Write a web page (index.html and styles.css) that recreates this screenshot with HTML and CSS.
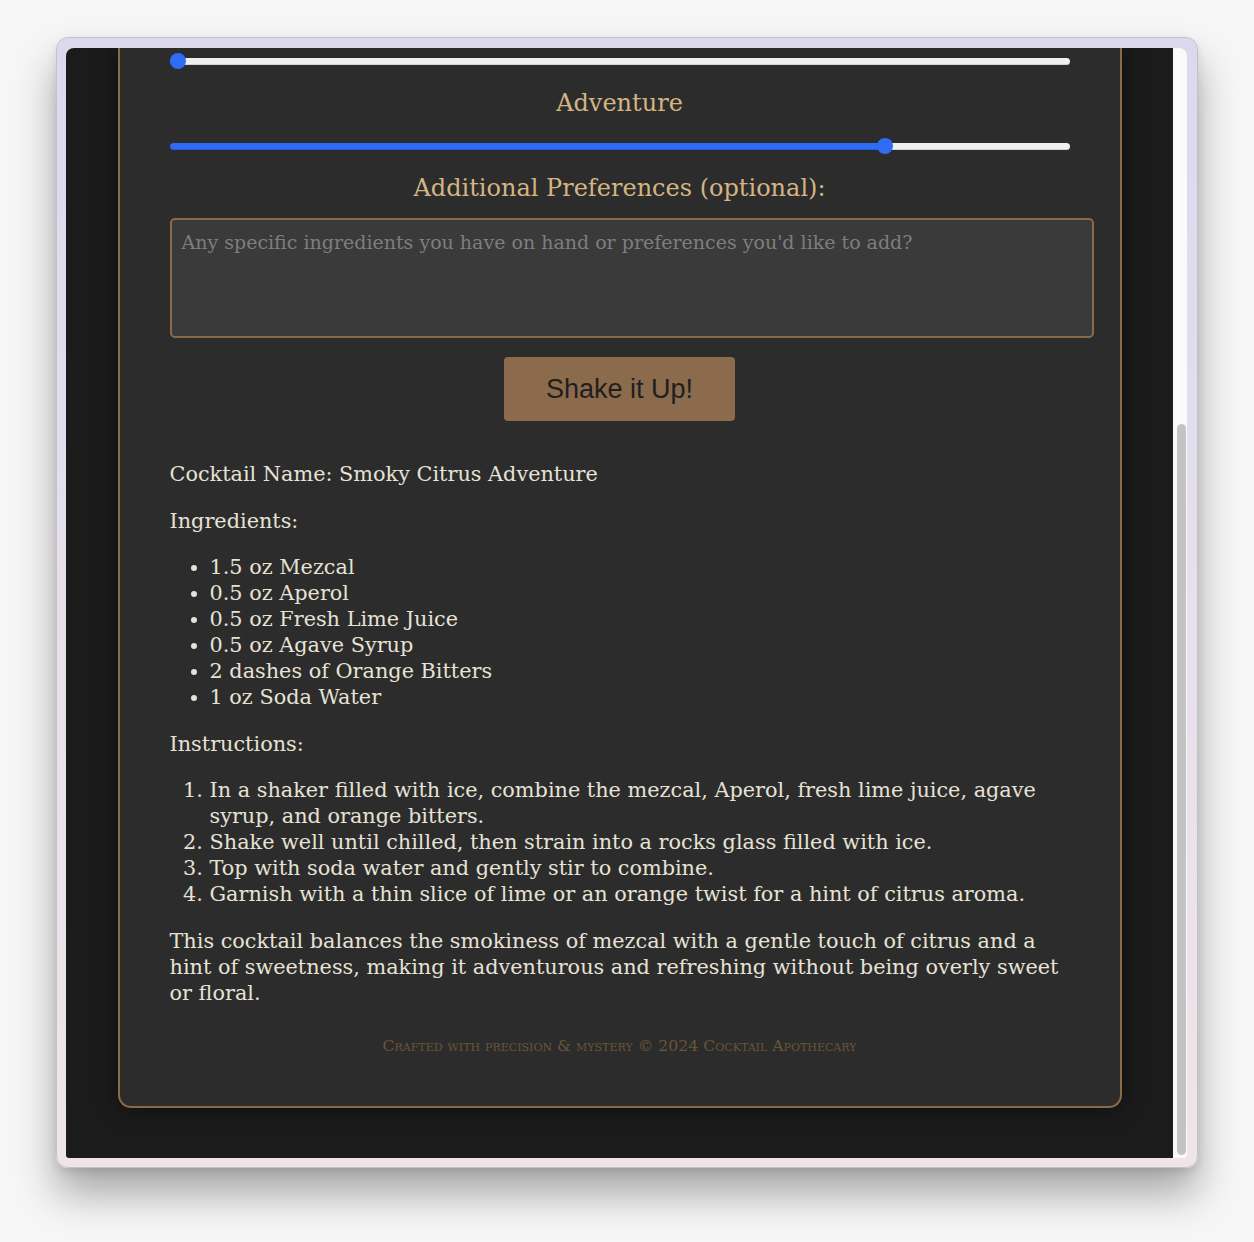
FILE: index.html
```html
<!DOCTYPE html>
<html lang="en">
<head>
<meta charset="utf-8">
<title>Cocktail Apothecary</title>
<link rel="stylesheet" href="styles.css">
</head>
<body>
<div class="window">
  <div class="viewport">
    <div class="page">
      <main class="card">
        <input type="range" class="slider" min="0" max="100" value="0" style="--p:0">
        <label class="label">Adventure</label>
        <input type="range" class="slider" min="0" max="100" value="80" style="--p:0.8">
        <label class="label">Additional Preferences (optional):</label>
        <textarea class="prefs" placeholder="Any specific ingredients you have on hand or preferences you'd like to add?"></textarea>
        <div class="actions"><button class="shake" type="button">Shake it Up!</button></div>
        <div class="result">
          <p>Cocktail Name: Smoky Citrus Adventure</p>
          <p>Ingredients:</p>
          <ul>
            <li>1.5 oz Mezcal</li>
            <li>0.5 oz Aperol</li>
            <li>0.5 oz Fresh Lime Juice</li>
            <li>0.5 oz Agave Syrup</li>
            <li>2 dashes of Orange Bitters</li>
            <li>1 oz Soda Water</li>
          </ul>
          <p>Instructions:</p>
          <ol>
            <li>In a shaker filled with ice, combine the mezcal, Aperol, fresh lime juice, agave syrup, and orange bitters.</li>
            <li>Shake well until chilled, then strain into a rocks glass filled with ice.</li>
            <li>Top with soda water and gently stir to combine.</li>
            <li>Garnish with a thin slice of lime or an orange twist for a hint of citrus aroma.</li>
          </ol>
          <p>This cocktail balances the smokiness of mezcal with a gentle touch of citrus and a hint of sweetness, making it adventurous and refreshing without being overly sweet or floral.</p>
        </div>
        <footer class="credit">Crafted with precision &amp; mystery © 2024 Cocktail Apothecary</footer>
      </main>
    </div>
    <div class="scrollbar"><div class="thumb"></div></div>
  </div>
</div>
</body>
</html>
```
FILE: styles.css
```css
* { box-sizing: border-box; }
html, body { margin: 0; padding: 0; }
body {
  background: #f6f6f6;
  width: 1254px;
  height: 1242px;
  overflow: hidden;
  padding: 37px 0 0 56px;
}
.window {
  width: 1142px;
  height: 1131px;
  border: 1px solid #c4c2c8;
  border-radius: 12px;
  background: linear-gradient(to bottom, #dcd9ef 0%, #e6e0ec 50%, #efe5e7 100%);
  padding: 10px 10px 9px 9px;
  box-shadow: 0 26px 40px rgba(0,0,0,0.32), 0 4px 10px rgba(0,0,0,0.10);
}
.viewport {
  display: flex;
  height: 1110px;
  border-radius: 8px 8px 3px 3px;
  overflow: hidden;
}
.page {
  flex: 1;
  background: #1b1b1b;
  padding: 0 0 51px;
  overflow: hidden;
}
.scrollbar {
  flex: none;
  width: 14px;
  background: #fafafa;
  padding: 376px 1px 3px 4px;
  display: flex;
}
.thumb {
  flex: 1;
  background: #c3c3c3;
  border-radius: 5px;
}
.card {
  width: 1004px;
  margin: 0 auto;
  background: #2c2c2c;
  border: 2px solid #8b6a4a;
  border-top: none;
  border-radius: 0 0 13px 13px;
  padding: 5px 50px 50px;
  box-shadow: 0 0 22px rgba(0,0,0,0.55);
  font-family: "DejaVu Serif", "Liberation Serif", serif;
  color: #e6e2d5;
}
.slider {
  -webkit-appearance: none;
  appearance: none;
  display: block;
  width: 900px;
  height: 16px;
  margin: 0;
  padding: 0;
  background: transparent;
}
.slider::-webkit-slider-runnable-track {
  height: 7px;
  border-radius: 4px;
  background: linear-gradient(to right, #2f6cf5 calc(8px + (100% - 16px) * var(--p)), #efefef 0);
  box-shadow: inset 0 -1px 0 rgba(0,0,0,0.12);
}
.slider::-webkit-slider-thumb {
  -webkit-appearance: none;
  appearance: none;
  width: 16px;
  height: 16px;
  border-radius: 50%;
  background: #2f6cf5;
  border: none;
  margin-top: -4.5px;
}
.slider + .label { margin-top: 19px; }
.label + .slider { margin-top: 20px; }
.label {
  display: block;
  text-align: center;
  font-size: 24px;
  line-height: 30px;
  color: #d4b483;
}
.prefs {
  display: block;
  width: 100%;
  box-sizing: content-box;
  height: 92px;
  margin: 15px 0 0;
  padding: 12px 10px;
  border: 2px solid #8b6a4a;
  border-radius: 5px;
  background: #3a3a3a;
  color: #e6e2d5;
  font-family: "DejaVu Serif", "Liberation Serif", serif;
  font-size: 19px;
  line-height: 20px;
  resize: none;
  outline: none;
}
.prefs::placeholder { color: #7e7e7e; }
.actions {
  display: flex;
  justify-content: center;
  margin-top: 19px;
}
.shake {
  width: 231px;
  height: 64px;
  border: none;
  border-radius: 4px;
  background: #8b6b4c;
  color: #1f1f1f;
  font-family: "Liberation Sans", Arial, sans-serif;
  font-size: 27px;
  padding: 0;
}
.result {
  display: flex;
  flex-direction: column;
  gap: 20.6px;
  margin-top: 40px;
  font-size: 20.8px;
  line-height: 26px;
}
.result p, .result ul, .result ol { margin: 0; }
.result ul, .result ol { padding-left: 40px; }
.credit {
  margin-top: 30px;
  text-align: center;
  font-size: 15.7px;
  line-height: 20px;
  font-variant: small-caps;
  color: #6a5539;
}
```
